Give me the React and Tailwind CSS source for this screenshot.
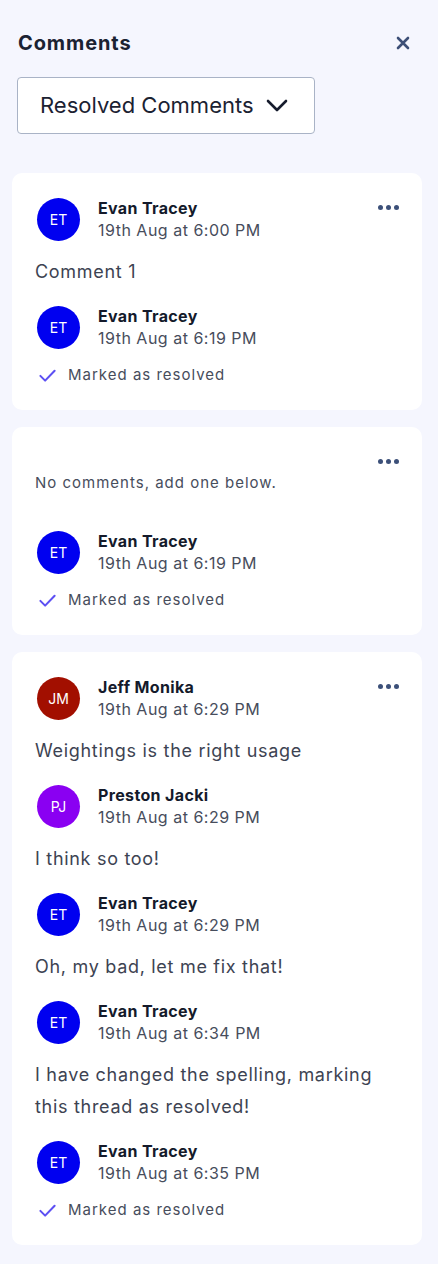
import React from 'react'

const font = { fontFamily: 'Inter, "Noto Sans", sans-serif' }

// avatar colours per user
const users = {
  ET: { name: 'Evan Tracey', bg: 'bg-[#0000f0]' },
  JM: { name: 'Jeff Monika', bg: 'bg-[#a20f00]' },
  PJ: { name: 'Preston Jacki', bg: 'bg-[#8a00f2]' },
}

const threads = [
  {
    comments: [{ user: 'ET', time: '6:00 PM', text: 'Comment 1' }],
    resolvedBy: { user: 'ET', time: '6:19 PM' },
  },
  {
    comments: [],
    resolvedBy: { user: 'ET', time: '6:19 PM' },
  },
  {
    comments: [
      { user: 'JM', time: '6:29 PM', text: 'Weightings is the right usage' },
      { user: 'PJ', time: '6:29 PM', text: 'I think so too!' },
      { user: 'ET', time: '6:29 PM', text: 'Oh, my bad, let me fix that!' },
      {
        user: 'ET',
        time: '6:34 PM',
        text: 'I have changed the spelling, marking this thread as resolved!',
      },
    ],
    resolvedBy: { user: 'ET', time: '6:35 PM' },
  },
]

const Author = ({ user, time }) => {
  const u = users[user]
  return (
    <div className="flex items-center">
      <div
        className={`ml-[2px] flex h-[43px] w-[43px] shrink-0 items-center justify-center rounded-full ${u.bg} text-[14px] text-white`}
      >
        {user}
      </div>
      <div className="ml-[18px] flex flex-col">
        <span className="text-[16px] font-bold leading-[21px] tracking-[0.35px] text-[#141a2b]">{u.name}</span>
        <span className="text-[16px] leading-[22px] tracking-[0.5px] text-[#474d5c]">19th Aug at {time}</span>
      </div>
    </div>
  )
}

const Dots = () => (
  <div className="absolute right-[23px] top-[32px] flex gap-[3px]">
    <span className="h-[5px] w-[5px] rounded-full bg-[#3c5079]" />
    <span className="h-[5px] w-[5px] rounded-full bg-[#3c5079]" />
    <span className="h-[5px] w-[5px] rounded-full bg-[#3c5079]" />
  </div>
)

const Thread = ({ thread }) => (
  <div className="relative rounded-[10px] bg-white px-[23px] pb-[25px] pt-[25px]">
    <Dots />
    {thread.comments.length === 0 && (
      <p className="mt-[21px] mb-[38px] text-[15px] leading-[20px] tracking-[1px] text-[#474d5c]">
        No comments, add one below.
      </p>
    )}
    {thread.comments.map((c, i) => (
      <div key={i} className="mb-[18px]">
        <Author user={c.user} time={c.time} />
        <p className="mt-[15px] text-[18px] leading-[32px] tracking-[0.7px] text-[#3d4352]">{c.text}</p>
      </div>
    ))}
    <Author user={thread.resolvedBy.user} time={thread.resolvedBy.time} />
    <div className="mt-[16px] flex items-center">
      <svg className="ml-[3px]" width="19" height="19" viewBox="0 0 24 24" fill="none" stroke="#5d50f3" strokeWidth="2.6" strokeLinecap="round" strokeLinejoin="round">
        <path d="M3 12.5l6 6L21 6" />
      </svg>
      <span className="ml-[11px] text-[15px] leading-[20px] tracking-[1px] text-[#474d5c]">Marked as resolved</span>
    </div>
  </div>
)

export default function App() {
  return (
    <div style={font} className="min-h-[1264px] w-full bg-[#f5f6fe] px-[12px] pb-[20px] pt-[30px]">
      <div className="flex items-center justify-between pl-[6px] pr-[16px]">
        <h1 className="text-[20px] font-bold leading-[26px] tracking-[0.9px] text-[#1b2232]">Comments</h1>
        <svg width="14" height="14" viewBox="0 0 14 14" fill="none" stroke="#3d4f77" strokeWidth="2.6" strokeLinecap="round">
          <path d="M2 2l10 10M12 2L2 12" />
        </svg>
      </div>
      <button className="ml-[5px] mt-[21px] flex h-[57px] w-[298px] items-center rounded-[4px] border border-[#a9b3c6] bg-white pl-[22px] text-[22px] text-[#1b2232]">
        Resolved Comments
        <svg className="ml-[12px]" width="22" height="13" viewBox="0 0 22 13" fill="none" stroke="#161c2d" strokeWidth="2.6" strokeLinecap="round" strokeLinejoin="round">
          <path d="M2 2l9 9 9-9" />
        </svg>
      </button>
      <div className="mt-[39px] flex flex-col gap-[17px] pr-[4px]">
        {threads.map((t, i) => (
          <Thread key={i} thread={t} />
        ))}
      </div>
    </div>
  )
}
